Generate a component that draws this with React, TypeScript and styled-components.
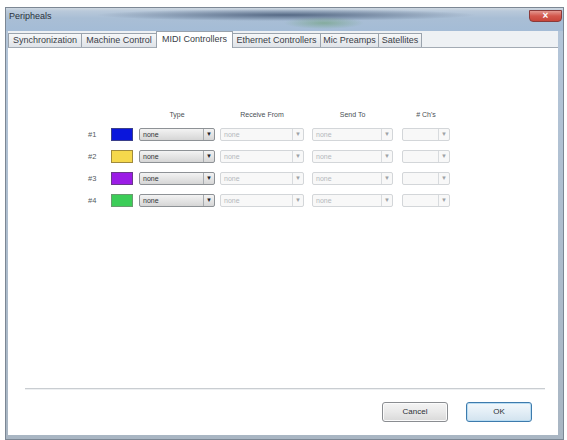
import React from "react";
import styled, { createGlobalStyle, css } from "styled-components";

const Global = createGlobalStyle`
  html, body { margin: 0; padding: 0; background: #ffffff; }
  body { font-family: "Liberation Sans", Arial, sans-serif; }
  * { box-sizing: border-box; }
`;

const Window = styled.div`
  margin: 7px 0 0 5px;
  width: 559px;
  height: 433px;
  border: 1px solid #7c8794;
  background: linear-gradient(to bottom, #b4c6da, #a9b6c3);
  display: flex;
  flex-direction: column;
`;

const TitleBar = styled.div`
  height: 23px;
  display: flex;
  align-items: flex-start;
  padding: 3px 1px 0 2px;
  background:
    radial-gradient(ellipse 40px 6px at 318px 15px, rgba(90, 150, 90, 0.45), transparent),
    radial-gradient(ellipse 190px 6px at 280px 7px, rgba(55, 75, 105, 0.75), rgba(55, 75, 105, 0) 100%),
    linear-gradient(to bottom, #cfd8e1 0px, #b9c9da 3px, #a9bed5 10px, #a4bcd6 23px);
`;

const Title = styled.span`
  font-size: 9px;
  color: #2a323c;
  line-height: 11px;
  padding-left: 1px;
`;

const CloseButton = styled.div`
  margin-left: auto;
  margin-top: -1px;
  width: 33px;
  height: 12px;
  border: 1px solid #8a3a3a;
  border-radius: 0 0 4px 4px;
  background: linear-gradient(to bottom, #e49890 0%, #d3574c 50%, #c8463b 100%);
  color: #ffffff;
  font-size: 10px;
  font-weight: bold;
  line-height: 10px;
  text-align: center;
`;

const Client = styled.div`
  flex: 1;
  margin: 0 5px 4px 2px;
  background: #ffffff;
  display: flex;
  flex-direction: column;
`;

const TabStrip = styled.div`
  height: 16px;
  display: flex;
  align-items: flex-end;
  background: #eef1f4;
`;

const Tab = styled.div<{ $w: number; $active?: boolean }>`
  width: ${(p) => p.$w}px;
  height: 14px;
  border: 1px solid #9aa3ad;
  border-bottom: none;
  margin-right: -1px;
  font-size: 9px;
  line-height: 13px;
  color: #3a4048;
  text-align: center;
  white-space: nowrap;
  overflow: hidden;
  background: linear-gradient(to bottom, #f6f7f8, #dfe3e8);
  ${(p) =>
    p.$active &&
    css`
      height: 17px;
      background: #ffffff;
      position: relative;
      z-index: 1;
      line-height: 14px;
      margin-bottom: -1px;
    `}
`;

const Panel = styled.div`
  flex: 1;
  border-top: 1px solid #a3abb4;
  display: flex;
  flex-direction: column;
`;

const Grid = styled.div`
  margin: 62px 0 0 78px;
  display: grid;
  grid-template-columns: 25px 28px 81px 92px 90px 48px;
  grid-template-rows: 9px repeat(4, 13px);
  row-gap: 9px;
  align-items: center;
`;

const Header = styled.div<{ $w: number }>`
  width: ${(p) => p.$w}px;
  font-size: 7px;
  line-height: 9px;
  color: #4a4f55;
  text-align: center;
  white-space: nowrap;
`;

const RowLabel = styled.div`
  font-size: 7.5px;
  color: #555a60;
  padding-left: 2px;
`;

const Swatch = styled.div<{ $c: string; $b: string }>`
  width: 22px;
  height: 13px;
  background: ${(p) => p.$c};
  border: 1px solid ${(p) => p.$b};
`;

const Combo = styled.div<{ $w: number; $on?: boolean }>`
  width: ${(p) => p.$w}px;
  height: 13px;
  display: flex;
  border: 1px solid ${(p) => (p.$on ? "#8e9296" : "#d3d6d9")};
  border-radius: 2px;
  background: ${(p) => (p.$on ? "linear-gradient(to bottom, #f3f3f3, #d6d6d6)" : "#f8f8f8")};
  color: ${(p) => (p.$on ? "#303438" : "#b4b8bc")};
  font-size: 7px;
  line-height: 11px;
`;

const ComboText = styled.span`
  flex: 1;
  padding-left: 3px;
  white-space: nowrap;
`;

const ComboArrow = styled.span<{ $on?: boolean }>`
  width: 11px;
  border-left: 1px solid ${(p) => (p.$on ? "#a8acb0" : "#d8dbde")};
  display: flex;
  align-items: center;
  justify-content: center;
  color: ${(p) => (p.$on ? "#202428" : "#9ea2a6")};
  font-size: 6px;
`;

const Footer = styled.div`
  margin-top: auto;
  display: flex;
  flex-direction: column;
`;

const Separator = styled.div`
  height: 2px;
  margin: 0 13px 0 17px;
  border-top: 1px solid #c9cdd1;
  border-bottom: 1px solid #eef0f2;
`;

const ButtonRow = styled.div`
  display: flex;
  justify-content: flex-end;
  gap: 18px;
  padding: 12px 26px 13px 0;
`;

const Button = styled.div<{ $default?: boolean }>`
  width: 66px;
  height: 20px;
  border: 1px solid ${(p) => (p.$default ? "#3d7bad" : "#8a8d91")};
  border-radius: 3px;
  background: ${(p) =>
    p.$default
      ? "linear-gradient(to bottom, #f2f8fc 0%, #e3eef6 50%, #d2e3ef 100%)"
      : "linear-gradient(to bottom, #f4f4f4 0%, #e9e9e9 50%, #d9d9d9 100%)"};
  box-shadow: inset 0 0 0 1px ${(p) => (p.$default ? "#b9dcf2" : "#fbfbfb")};
  font-size: 8px;
  line-height: 18px;
  text-align: center;
  color: #2c3035;
`;

const tabs = [
  { label: "Synchronization", w: 74 },
  { label: "Machine Control", w: 76 },
  { label: "MIDI Controllers", w: 77, active: true },
  { label: "Ethernet Controllers", w: 89 },
  { label: "Mic Preamps", w: 59 },
  { label: "Satellites", w: 44 },
];

const rows = [
  { n: "#1", c: "#0a16dc", b: "#3a3f8a" },
  { n: "#2", c: "#f5d84c", b: "#a08a3c" },
  { n: "#3", c: "#9b1ce6", b: "#6a3a8a" },
  { n: "#4", c: "#3ccd58", b: "#6a9a70" },
];

export default function App() {
  return (
    <>
      <Global />
      <Window>
        <TitleBar>
          <Title>Peripheals</Title>
          <CloseButton>×</CloseButton>
        </TitleBar>
        <Client>
          <TabStrip>
            {tabs.map((t) => (
              <Tab key={t.label} $w={t.w} $active={t.active}>
                {t.label}
              </Tab>
            ))}
          </TabStrip>
          <Panel>
            <Grid>
              <span />
              <span />
              <Header $w={76}>Type</Header>
              <Header $w={84}>Receive From</Header>
              <Header $w={81}>Send To</Header>
              <Header $w={48}># Ch's</Header>
              {rows.map((r) => (
                <React.Fragment key={r.n}>
                  <RowLabel>{r.n}</RowLabel>
                  <Swatch $c={r.c} $b={r.b} />
                  <Combo $w={76} $on>
                    <ComboText>none</ComboText>
                    <ComboArrow $on>▼</ComboArrow>
                  </Combo>
                  <Combo $w={84}>
                    <ComboText>none</ComboText>
                    <ComboArrow>▼</ComboArrow>
                  </Combo>
                  <Combo $w={81}>
                    <ComboText>none</ComboText>
                    <ComboArrow>▼</ComboArrow>
                  </Combo>
                  <Combo $w={48}>
                    <ComboText />
                    <ComboArrow>▼</ComboArrow>
                  </Combo>
                </React.Fragment>
              ))}
            </Grid>
            <Footer>
              <Separator />
              <ButtonRow>
                <Button>Cancel</Button>
                <Button $default>OK</Button>
              </ButtonRow>
            </Footer>
          </Panel>
        </Client>
      </Window>
    </>
  );
}
